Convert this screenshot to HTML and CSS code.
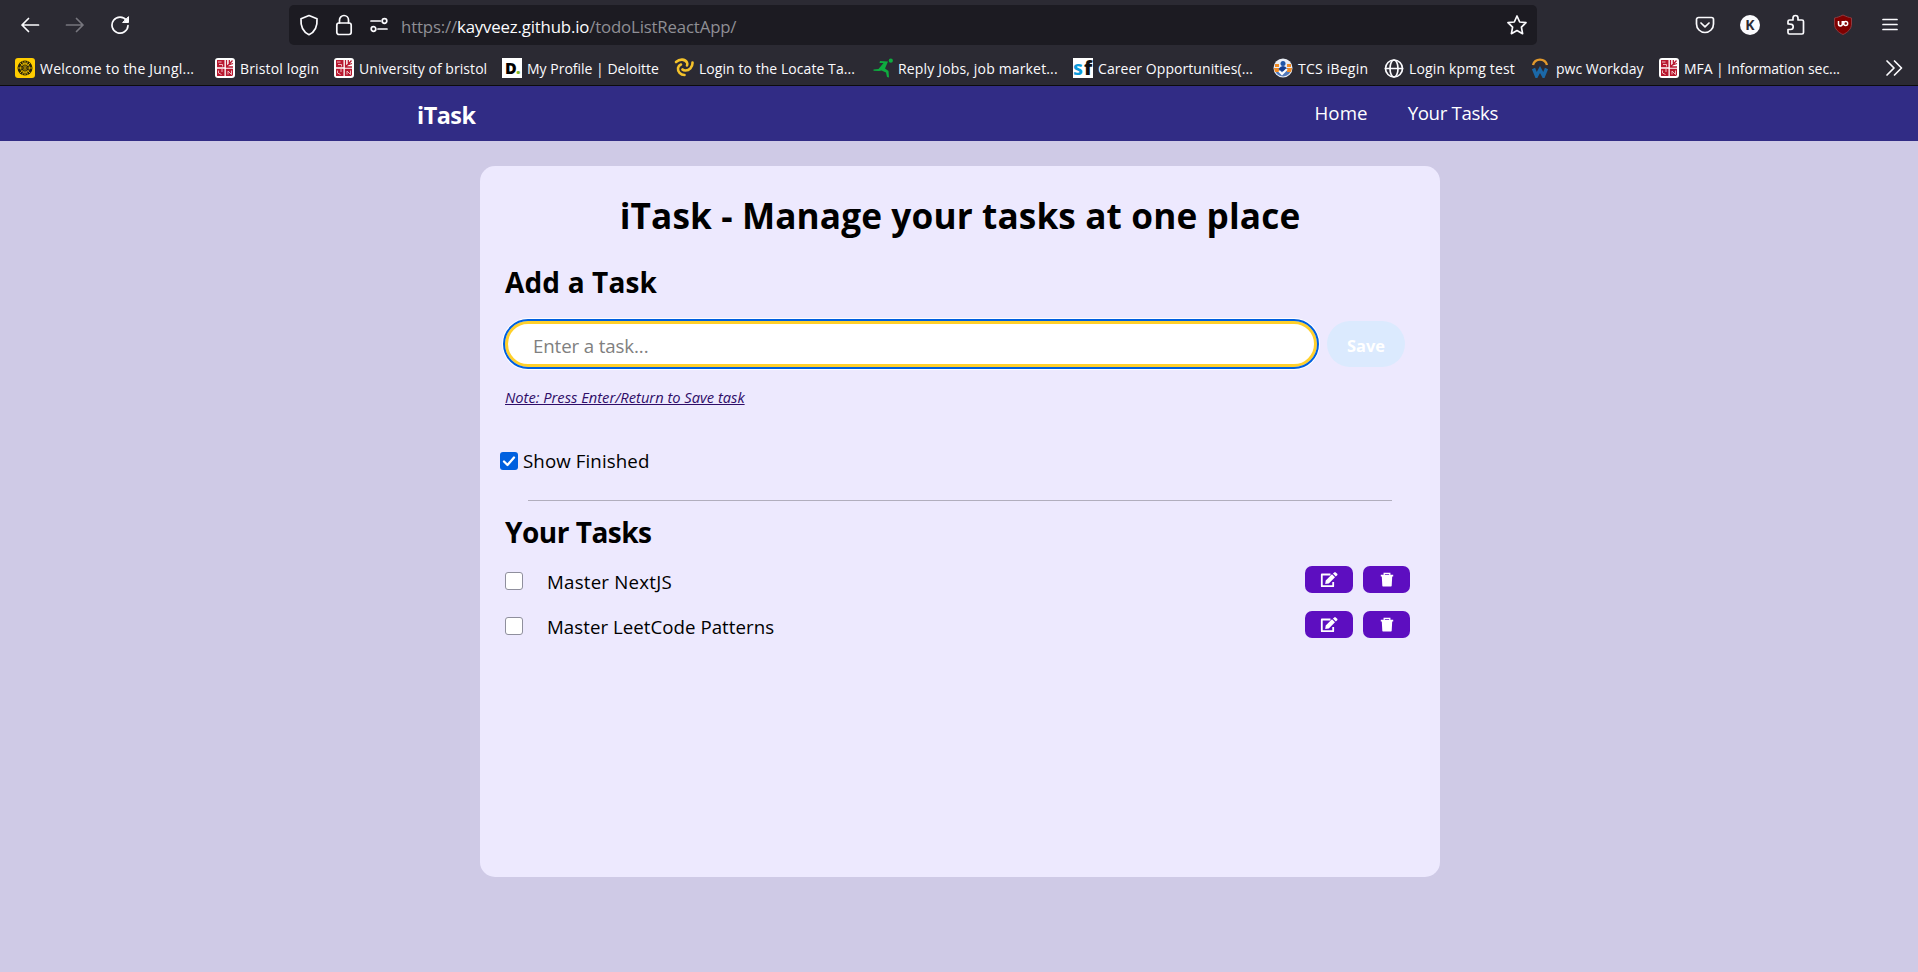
FILE: index.html
```html
<!DOCTYPE html>
<html lang="en">
<head>
<meta charset="utf-8">
<title>iTask</title>
<link rel="stylesheet" href="styles.css">
</head>
<body>
<svg class="defs" width="0" height="0">
  <symbol id="crest" viewBox="0 0 20 20">
    <rect width="20" height="20" rx="3" fill="#fff"/>
    <path fill="#b8172f" d="M2 2h7.500v7.200H2zM2 10.800h7.500V18H2zM10.800 10.800H18V17l-1 1h-6.200z"/>
    <path d="M11.500 2v7h6.500M12 8.500l5.500-6M14.300 2v4M13.500 7l4.500-1.500" fill="none" stroke="#b8172f" stroke-width="1.300"/>
    <path d="M3 4h3.500M4 6.500h3.500v2M3.500 12.500v2.500l3 1.500M7 11v3M13 16.500v-3.500l3.500 3.500v-4" fill="none" stroke="#f3c9cf" stroke-width=".9"/>
  </symbol>
  <symbol id="edit" viewBox="0 0 18 16">
    <path d="M10.500 2.500H1.800v11.700h11.400V10" fill="none" stroke="#fff" stroke-width="1.800" stroke-linejoin="round"/>
    <path d="M5.200 12l.5-3.600 6.300-6.100 3 3-6.200 6.200zM12.900 1.600L14.300.4q.7-.6 1.400 0l1.500 1.400q.6.700 0 1.400l-1.400 1.300z" fill="#fff"/>
  </symbol>
  <symbol id="trash" viewBox="0 0 14 16">
    <path d="M4.200 3V1.300h5.600V3" fill="none" stroke="#fff" stroke-width="1.300"/>
    <path d="M.8 2.700h12.400v1.800H.8zM1.800 4.500h10.400l-.5 9.300q0 .7-.7.700H3q-.7 0-.7-.7z" fill="#fff"/>
  </symbol>
</svg>

<header class="browser">
  <div class="toolbar">
    <div class="history">
      <svg width="20" height="20" viewBox="0 0 20 20" class="line"><path d="M18.500 10H2M8.500 3.500L2 10l6.500 6.500"/></svg>
      <svg width="20" height="20" viewBox="0 0 20 20" class="line dim"><path d="M1.500 10H18M11.500 3.500L18 10l-6.500 6.500"/></svg>
      <svg width="20" height="20" viewBox="0 0 20 20" class="line"><path d="M16.500 5.500A8 8 0 1 0 18 10.500"/><path d="M18.500 2v5.500H13z" fill="#fbfbfe" stroke-width="1"/></svg>
    </div>
    <div class="urlbar">
      <svg width="20" height="22" viewBox="0 0 20 22" class="line"><path d="M10 1.500l8 3.200c.5 7-1.500 13-8 16-6.500-3-8.500-9-8-16z"/></svg>
      <svg width="18" height="22" viewBox="0 0 18 22" class="line"><rect x="1.800" y="9" width="14.400" height="11.500" rx="2.200"/><path d="M4.500 9V6a4.500 4.500 0 0 1 9 0v3"/></svg>
      <svg width="20" height="16" viewBox="0 0 20 16" class="line"><path d="M2 4h9.500M9 12h9"/><circle cx="15.500" cy="4" r="2.300"/><circle cx="4.500" cy="12" r="2.300"/></svg>
      <div class="url"><span>https://</span><b>kayveez.github.io</b><span>/todoListReactApp/</span></div>
      <svg class="line star" width="22" height="22" viewBox="0 0 22 22"><path d="M11 2l2.700 6 6.300.7-4.600 4.500 1.200 6.500L11 16.500l-5.600 3.200 1.200-6.500L2 8.700 8.300 8z"/></svg>
    </div>
    <div class="tools">
      <svg width="20" height="20" viewBox="0 0 20 20" class="line"><path d="M3.500 2.500h13a2 2 0 0 1 2 2V9a8.500 8.500 0 0 1-17 0V4.500a2 2 0 0 1 2-2z"/><path d="M6 8l4 3.800L14 8"/></svg>
      <span class="avatar">K</span>
      <svg width="20" height="22" viewBox="0 0 20 22" class="line"><path d="M2 10V7.500Q2 6 3.500 6H7V4a2.500 2.500 0 0 1 5 0v2h4q1.500 0 1.500 1.500v11q0 1.500-1.500 1.500H3.500Q2 20 2 18.500V15.500h2.500a2.700 2.700 0 0 0 0-5.400z"/></svg>
      <span class="ublock"><svg width="20" height="22" viewBox="0 0 20 22"><path d="M10 1c3 1.500 6 2.500 8.500 3v6c0 5-4 8.500-8.500 10.500C5.500 18.500 1.500 15 1.500 10V4C4 3.500 7 2.500 10 1z" fill="#800000" stroke="#8d3a3f"/><path d="M5.500 7v3a1.900 1.900 0 0 0 3.800 0V7M10.500 7v4" fill="none" stroke="#fff" stroke-width="1.500"/><circle cx="12.700" cy="9.500" r="2" fill="none" stroke="#fff" stroke-width="1.400"/></svg></span>
      <svg width="18" height="18" viewBox="0 0 18 18" class="line"><path d="M2 3.500h14M2 8.500h14M2 13.500h14"/></svg>
    </div>
  </div>
  <nav class="bookmarks">
    <a><svg viewBox="0 0 20 20"><rect width="20" height="20" rx="3" fill="#ffcd00"/><circle cx="10" cy="10" r="7.500" fill="#2a2408"/><path d="M10 3v14M3 10h14M5 5l10 10M15 5L5 15M7.500 3.500l5 13M12.500 3.500l-5 13" stroke="#ffcd00" stroke-width=".8"/><circle cx="10" cy="10" r="4.500" fill="none" stroke="#ffcd00" stroke-width=".6"/><path d="M6.500 10h7M7.500 8h5M7.500 12h5" stroke="#2a2408" stroke-width="1.200"/></svg><span class="t1">Welcome to the Jungl...</span></a>
    <a><svg><use href="#crest"/></svg><span class="t2">Bristol login</span></a>
    <a><svg><use href="#crest"/></svg><span class="t3">University of bristol</span></a>
    <a><i class="deloitte">D<em>.</em></i><span class="t4">My Profile | Deloitte</span></a>
    <a><svg viewBox="0 0 20 20"><g fill="none" stroke="#f4c22b" stroke-linecap="round"><path d="M2 4C6 .5 11 1 13 4.500q.7 1.500 0 3" stroke-width="2.600"/><path d="M18.500 4.500c.3 5-3.500 8-7 8q-2 0-3-1" stroke-width="2.600"/><path d="M10.500 17C6.500 17 3.500 13.500 4 10q.5-2.500 3-3.500" stroke-width="2.600"/></g></svg><span class="t5">Login to the Locate Ta...</span></a>
    <a><svg viewBox="0 0 20 20"><circle cx="17.800" cy="2.700" r="2.100" fill="#0eac3f"/><path d="M7 3l8 .5-3 7L15.500 13l.5 6.500-2-.5-1-4.500-4.500-2L6 13 .5 12.800v-1.300l5-.5 5-6H6.500z" fill="#0eac3f"/></svg><span class="t6">Reply Jobs, job market...</span></a>
    <a><i class="sf"><em>s</em><b>f</b></i><span class="t7">Career Opportunities(...</span></a>
    <a><svg viewBox="0 0 20 20"><circle cx="10" cy="10" r="9.500" fill="#e9edf5"/><path d="M1.500 10a8.500 8.500 0 0 0 17 0z" fill="#5279b9"/><path d="M2 6h4v3H2zM14 6h4v3h-4zM1 10h5v4H2zM14 10h5l-1 4h-4z" fill="#ef8a25"/><circle cx="10" cy="5.500" r="2.500" fill="#2157a8"/><path d="M5.500 11q4.500-6 9 0l-3 2h-3z" fill="#153f91"/><path d="M6 13l3 3 5-5" fill="none" stroke="#fff" stroke-width="2"/></svg><span class="t8">TCS iBegin</span></a>
    <a><svg viewBox="0 0 20 20" class="line"><circle cx="10" cy="10.500" r="8.500"/><ellipse cx="10" cy="10.500" rx="4" ry="8.500"/><path d="M1.500 10.500h17"/></svg><span class="t9">Login kpmg test</span></a>
    <a><svg viewBox="0 0 20 20"><path d="M2 7C4-.2 14-.2 16 7" fill="none" stroke="#e2992c" stroke-width="2.400"/><path d="M2.500 10.500L5.500 18 9 11.500l3.500 6.500 3-7.500" fill="none" stroke="#1b68a8" stroke-width="3.400"/></svg><span class="t10">pwc Workday</span></a>
    <a><svg><use href="#crest"/></svg><span class="t11">MFA | Information sec...</span></a>
    <svg viewBox="0 0 20 20" class="line more"><path d="M3 3l7 7-7 7M10.500 3l7 7-7 7"/></svg>
  </nav>
</header>

<nav class="navbar">
  <div class="brand">iTask</div>
  <ul>
    <li class="home">Home</li>
    <li class="tasks">Your Tasks</li>
  </ul>
</nav>

<main class="card">
  <h1><span>iTask - Manage your tasks at one place</span></h1>
  <h2 class="add">Add a Task</h2>
  <div class="entry">
    <div class="field"><span>Enter a task...</span></div>
    <div class="save"><span>Save</span></div>
  </div>
  <p class="note"><span>Note: Press Enter/Return to Save task</span></p>
  <div class="filter">
    <span class="check on"><svg width="18" height="18" viewBox="0 0 18 18"><path d="M4 9.500l3.500 3.500L14 5.500" fill="none" stroke="#fff" stroke-width="2.300" stroke-linecap="round" stroke-linejoin="round"/></svg></span>
    <span class="show">Show Finished</span>
  </div>
  <div class="rule"></div>
  <h2 class="yours">Your Tasks</h2>
  <div class="task">
    <span class="check"></span><span class="name n1">Master NextJS</span>
    <div class="btn wide"><svg width="18" height="16"><use href="#edit"/></svg></div>
    <div class="btn"><svg width="14" height="16"><use href="#trash"/></svg></div>
  </div>
  <div class="task">
    <span class="check"></span><span class="name n2">Master LeetCode Patterns</span>
    <div class="btn wide"><svg width="18" height="16"><use href="#edit"/></svg></div>
    <div class="btn"><svg width="14" height="16"><use href="#trash"/></svg></div>
  </div>
</main>
</body>
</html>
```
FILE: styles.css
```css
* { box-sizing: border-box; margin: 0; padding: 0; }
body {
  height: 972px;
  overflow: hidden;
  background: #cfcae6;
  font-family: "Open Sans", "Noto Sans", sans-serif;
  font-size: 18.7px;
  color: #000;
}
.defs { position: absolute; }
svg { display: block; flex: none; }
span { white-space: nowrap; }
.line { fill: none; stroke: #fbfbfe; stroke-width: 1.7; stroke-linecap: round; stroke-linejoin: round; }
.dim { stroke: #77767e; }

.browser { height: 86px; background: #2b2a33; border-bottom: 1px solid #0c0c0d; }
.toolbar { display: flex; height: 50px; align-items: center; }
.history { display: flex; gap: 25px; padding-left: 20px; width: 289px; }
.urlbar {
  display: flex; align-items: center;
  width: 1248px; height: 40px; border-radius: 5px;
  padding: 0 9px 0 10px;
  background: #1c1b22;
}
.urlbar svg + svg { margin-left: 16px; }
.url { flex: 1; padding: 4px 0 0 12px; color: #8f8f95; font-size: 16.8px; line-height: 24px; letter-spacing: -.16px; }
.url b { color: #fbfbfe; font-weight: 400; }
.tools { display: flex; align-items: center; padding-left: 158px; }
.avatar {
  width: 20px; height: 20px; margin: 0 26px 0 25px; border-radius: 50%;
  background: #fbfbfe; color: #2b2a33;
  font-size: 14px; font-weight: 700; line-height: 20px; text-align: center;
}
.ublock { margin: 0 28px 0 27px; }

.bookmarks {
  display: grid; align-items: center;
  grid-template-columns: 200px 119px 168px 172px 199px 200px 200px 111px 147px 128px 225px 24px;
  height: 35px; padding-left: 15px;
  color: #fbfbfe; font-size: 14px; line-height: 20px;
}
.bookmarks a { display: flex; align-items: center; gap: 5px; }
.bookmarks svg { width: 20px; height: 20px; }
.bookmarks a > span { padding-top: 2px; }
.bookmarks .t1 { letter-spacing: .22px; }
.bookmarks .t2 { letter-spacing: .15px; }
.bookmarks .t3 { letter-spacing: .06px; }
.bookmarks .t5 { letter-spacing: .06px; }
.bookmarks .t6 { letter-spacing: .16px; }
.bookmarks .t7 { letter-spacing: .06px; }
.bookmarks .t8 { letter-spacing: .22px; }
.bookmarks .t9 { letter-spacing: .15px; }
.bookmarks .t11 { letter-spacing: -.05px; }
.deloitte, .sf { width: 20px; height: 20px; background: #fff; font-style: normal; flex: none; }
.deloitte { padding-left: 3px; font: 800 16px/20px "Open Sans", sans-serif; color: #000; letter-spacing: -.8px; }
.deloitte em { color: #86bc25; font-style: normal; }
.sf { display: flex; font: 700 20px/20px "Open Sans", sans-serif; }
.sf em { width: 11px; color: #0a9bdc; font-style: normal; }
.sf b { color: #111; width: 9px; }

.navbar {
  display: flex; justify-content: space-between;
  height: 55px; padding: 0 420px 0 417px;
  background: #312c85; color: #fff;
}
.brand { font-size: 23.4px; font-weight: 700; line-height: 32px; padding-top: 13px; letter-spacing: -.5px; }
.navbar ul { display: flex; gap: 40px; list-style: none; line-height: 28px; padding-top: 13px; }
.home { letter-spacing: .1px; }
.tasks { letter-spacing: -.36px; }

.card {
  width: 960px; height: 711px; margin: 25px auto 0 480px;
  padding: 24px 25px 0; border-radius: 15px;
  background: #ede9fe;
}
h1 { font-size: 35.200px; line-height: 50px; text-align: center; letter-spacing: .12px; }
h2 { font-size: 28px; line-height: 40px; }
.add { padding-top: 22px; height: 68px; letter-spacing: .15px; }
.entry { display: flex; gap: 10px; padding-top: 13px; }
.field {
  width: 812px; height: 46px; border: 3px solid #ffd02b; border-radius: 23px;
  outline: 2px solid #0060df; box-shadow: 0 0 0 3px #fff;
  background: #fff; color: #808080; letter-spacing: -.12px;
  padding: 8px 0 0 25px; line-height: 28px;
}
.save {
  width: 78px; height: 46px; border-radius: 23px; background: #dbeafe;
  color: #fff; font-size: 16.400px; font-weight: 700; line-height: 50px; text-align: center;
}
.note { padding-top: 18px; font-size: 14.700px; line-height: 25px; font-style: italic; color: #2f0d68; text-decoration: underline; }
.filter { display: flex; align-items: center; gap: 5px; height: 28px; margin: 37px 0 0 -5px; }
.show { padding-bottom: 2px; letter-spacing: .1px; }
.check { width: 18px; height: 18px; border: 1px solid #8f8f9d; border-radius: 3px; background: #fff; flex: none; }
.check.on { border: 0; background: #0060df; }
.rule { height: 1px; margin: 25px 23px 0; background: #b1aebd; }
.yours { padding-top: 11px; height: 65px; letter-spacing: -.5px; }
.task { display: flex; align-items: flex-start; height: 45px; padding-right: 5px; }
.task .check { margin-top: 6px; }
.name { flex: 1; margin-left: 24px; line-height: 28px; padding-top: 2px; }
.n1 { letter-spacing: .22px; }
.n2 { letter-spacing: .03px; }
.btn { display: flex; justify-content: center; align-items: center; width: 47px; height: 27px; margin-left: 10px; border-radius: 7px; background: #5d0ec0; }
.btn.wide { width: 48px; }
```
